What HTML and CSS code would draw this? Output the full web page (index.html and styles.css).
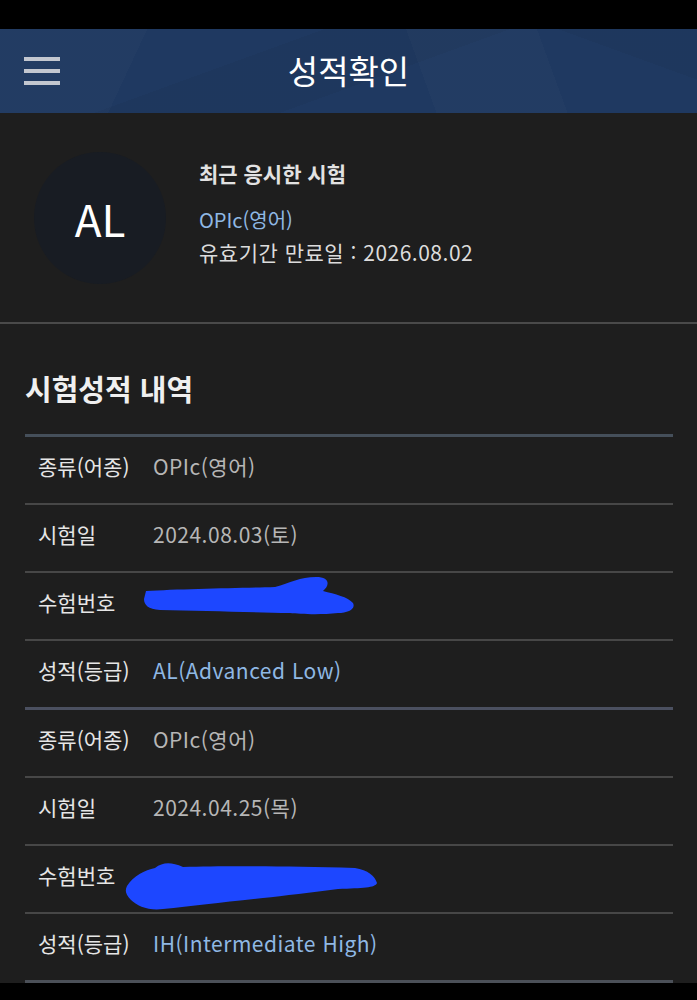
FILE: index.html
```html
<!DOCTYPE html>
<html lang="ko">
<head>
    <meta charset="UTF-8">
    <meta name="viewport" content="width=device-width, initial-scale=1.0">
    <title>성적확인</title>
    <link rel="stylesheet" href="styles.css">
</head>
<body>
    <div class="status-bar"></div>
    <header class="top-bar">
        <button class="menu-btn" aria-label="메뉴">
            <span></span><span></span><span></span>
        </button>
        <h1>성적확인</h1>
    </header>

    <section class="profile">
        <div class="avatar">AL</div>
        <div class="profile-info">
            <p class="recent">최근 응시한 시험</p>
            <p class="exam-name">OPIc(영어)</p>
            <p class="expire">유효기간 만료일 : 2026.08.02</p>
        </div>
    </section>

    <section class="history">
        <h2>시험성적 내역</h2>

        <div class="score-group">
            <div class="score-row">
                <span class="label">종류(어종)</span>
                <span class="value">OPIc(영어)</span>
            </div>
            <div class="score-row">
                <span class="label">시험일</span>
                <span class="value">2024.08.03(토)</span>
            </div>
            <div class="score-row">
                <span class="label">수험번호</span>
                <span class="value"></span>
                <!-- redaction scribble drawn over the number -->
                <svg class="scribble scribble-one" width="230" height="50" viewBox="0 0 230 50">
                    <path d="M6 18 C40 16 100 15 135 14 C150 10 160 4 176 4 C190 4 190 12 183 18 C195 21 208 24 213 30 C216 36 208 40 198 40 C180 42 160 41 150 40 C110 39 60 38 20 37 C8 36 4 32 4 26 Z" />
                </svg>
            </div>
            <div class="score-row">
                <span class="label">성적(등급)</span>
                <span class="value grade">AL(Advanced Low)</span>
            </div>
        </div>

        <div class="score-group">
            <div class="score-row">
                <span class="label">종류(어종)</span>
                <span class="value">OPIc(영어)</span>
            </div>
            <div class="score-row">
                <span class="label">시험일</span>
                <span class="value">2024.04.25(목)</span>
            </div>
            <div class="score-row">
                <span class="label">수험번호</span>
                <span class="value"></span>
                <svg class="scribble scribble-two" width="260" height="56" viewBox="0 0 260 56">
                    <path d="M4 28 C10 18 22 12 32 10 C40 4 48 4 60 9 C100 8 160 8 232 10 C245 12 252 18 254 25 C252 30 240 30 215 31 C190 34 160 38 140 40 C100 44 70 48 40 51 C26 53 14 48 8 42 C2 36 2 32 4 28 Z" />
                </svg>
            </div>
            <div class="score-row">
                <span class="label">성적(등급)</span>
                <span class="value grade">IH(Intermediate High)</span>
            </div>
        </div>
    </section>

    <div class="nav-bar"></div>
</body>
</html>
```

FILE: styles.css
```css
body {
    margin: 0;
    background-color: #1e1e1e;
    color: #e4e4e4;
    font-family: "Noto Sans CJK KR", "Noto Sans", sans-serif;
}
p, h1, h2 {
    margin: 0;
}
.status-bar {
    height: 29px;
    background-color: #000;
}
.top-bar {
    position: relative;
    height: 84px;
    display: flex;
    align-items: center;
    justify-content: center;
    background-color: #1f3961;
    background-image:
        linear-gradient(115deg, rgba(255, 255, 255, 0.015) 0 20%, transparent 20% 100%),
        linear-gradient(160deg, transparent 0 35%, rgba(0, 0, 0, 0.04) 35% 55%, transparent 55% 100%),
        linear-gradient(70deg, transparent 0 60%, rgba(255, 255, 255, 0.015) 60% 78%, transparent 78% 100%),
        linear-gradient(200deg, rgba(0, 0, 0, 0.04) 0 15%, transparent 15% 100%);
}
.top-bar h1 {
    font-size: 33px;
    font-weight: 400;
    color: #fff;
    line-height: 40px;
    margin-top: -3px;
}
.menu-btn {
    position: absolute;
    left: 24px;
    top: 28px;
    width: 36px;
    padding: 0;
    border: none;
    background: none;
    display: flex;
    flex-direction: column;
    gap: 8px;
}
.menu-btn span {
    display: block;
    height: 4px;
    background-color: #c3c7d0;
}
.profile {
    height: 209px;
    display: flex;
    align-items: center;
    padding-left: 34px;
    border-bottom: 2px solid #4a4a4a;
}
.avatar {
    width: 132px;
    height: 132px;
    border-radius: 50%;
    background-color: #181c23;
    color: #fff;
    font-size: 44px;
    display: flex;
    align-items: center;
    justify-content: center;
    flex-shrink: 0;
}
.profile-info {
    margin-left: 33px;
    margin-bottom: 8px;
}
.recent {
    font-size: 21px;
    font-weight: 700;
    line-height: 28px;
    color: #e2e2e2;
    margin-bottom: 17px;
}
.exam-name, .expire {
    font-size: 20px;
    line-height: 32px;
    color: #dcdcdc;
}
.exam-name {
    color: #8fb8e4;
}
.expire {
    font-size: 21px;
    letter-spacing: 0.5px;
}
.history {
    padding: 0 24px 0 25px;
}
.history h2 {
    font-size: 29px;
    font-weight: 700;
    line-height: 36px;
    color: #f0f0f0;
    padding-top: 46px;
    margin-bottom: 28px;
}
.score-group {
    border-top: 3px solid #454f5a;
}
.score-group + .score-group {
    border-top-color: #4b5060;
}
.score-group:last-child {
    border-bottom: 3px solid #4b5058;
}
.score-row {
    position: relative;
    height: 58px;
    padding-bottom: 8px;
    display: flex;
    align-items: center;
    padding-left: 13px;
    font-size: 21px;
    border-bottom: 2px solid #474747;
}
.score-row:last-child {
    border-bottom: none;
}
.label {
    width: 115px;
    color: #e6e6e6;
}
.value {
    color: #b6b6b6;
    letter-spacing: 0.5px;
}
.value.grade {
    color: #8fb8e4;
}
.scribble {
    position: absolute;
    fill: #1d47ff;
}
.scribble-one {
    left: 115px;
    top: 0;
}
.scribble-two {
    left: 98px;
    top: 12px;
}
.nav-bar {
    height: 20px;
    background-color: #000;
}
```
